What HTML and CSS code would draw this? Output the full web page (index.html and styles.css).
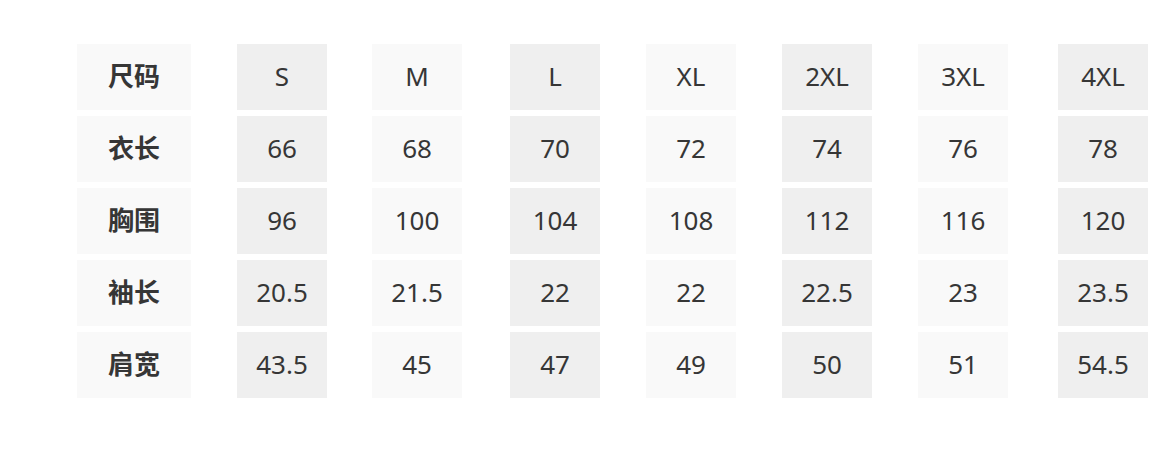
FILE: index.html
```html
<!DOCTYPE html>
<html lang="zh">
<head>
<meta charset="utf-8">
<link rel="stylesheet" href="styles.css">
</head>
<body>
<div class="chart">
  <div class="cell label">尺码</div><div class="cell dark">S</div><div class="cell light">M</div><div class="cell dark">L</div><div class="cell light">XL</div><div class="cell dark">2XL</div><div class="cell light">3XL</div><div class="cell dark">4XL</div>
  <div class="cell label">衣长</div><div class="cell dark">66</div><div class="cell light">68</div><div class="cell dark">70</div><div class="cell light">72</div><div class="cell dark">74</div><div class="cell light">76</div><div class="cell dark">78</div>
  <div class="cell label">胸围</div><div class="cell dark">96</div><div class="cell light">100</div><div class="cell dark">104</div><div class="cell light">108</div><div class="cell dark">112</div><div class="cell light">116</div><div class="cell dark">120</div>
  <div class="cell label">袖长</div><div class="cell dark">20.5</div><div class="cell light">21.5</div><div class="cell dark">22</div><div class="cell light">22</div><div class="cell dark">22.5</div><div class="cell light">23</div><div class="cell dark">23.5</div>
  <div class="cell label">肩宽</div><div class="cell dark">43.5</div><div class="cell light">45</div><div class="cell dark">47</div><div class="cell light">49</div><div class="cell dark">50</div><div class="cell light">51</div><div class="cell dark">54.5</div>
</div>
</body>
</html>
```
FILE: styles.css
```css
html, body {
  margin: 0;
  padding: 0;
  background: #ffffff;
}
body {
  font-family: "Noto Sans", "Noto Sans CJK SC", sans-serif;
  color: #363636;
}
.chart {
  display: grid;
  grid-template-columns: 160px 135px 138px 136px 136px 136px 140px 90px;
  grid-auto-rows: 66px;
  row-gap: 6px;
  padding: 44px 0 0 77px;
}
.cell {
  width: 90px;
  display: flex;
  align-items: center;
  justify-content: center;
  box-sizing: border-box;
  padding-bottom: 2px;
  font-size: 26px;
  font-weight: 400;
  line-height: 1;
}
.label {
  width: 114px;
  background: #f9f9f9;
  font-family: "Noto Sans CJK SC", sans-serif;
  font-weight: 700;
  padding-bottom: 4px;
}
.light {
  background: #f9f9f9;
}
.dark {
  background: #efefef;
}
```
